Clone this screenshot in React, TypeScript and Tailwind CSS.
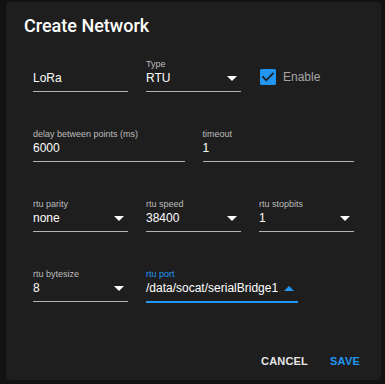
import React from 'react';

const sans = { fontFamily: '"Liberation Sans", Arial, sans-serif' };

function ArrowDown({ up = false, blue = false }: { up?: boolean; blue?: boolean }) {
  return (
    <svg width="10" height="5" viewBox="7 10 10 5" className={blue ? 'text-[#2196f3]' : 'text-white'} fill="currentColor">
      {up ? <path d="M7 15l5-5 5 5z" /> : <path d="M7 10l5 5 5-5z" />}
    </svg>
  );
}

type FieldProps = {
  label?: string;
  value: string;
  width: string;
  select?: boolean;
  focused?: boolean;
};

function Field({ label, value, width, select, focused }: FieldProps) {
  return (
    <div
      className={`${width} flex flex-col pb-[5px] ${
        focused ? 'border-b-2 border-[#2196f3]' : 'border-b border-[#b3b3b3]'
      }`}
    >
      <div className={`h-[11px] text-[9px] leading-[11px] ${focused ? 'text-[#2196f3]' : 'text-[#bdbdbd]'}`}>
        {label}
      </div>
      <div className="h-[16px] flex items-center justify-between pr-[4px] text-[12px] leading-[16px] text-white">
        <span className="whitespace-nowrap">{value}</span>
        {select && <ArrowDown up={focused} blue={focused} />}
      </div>
    </div>
  );
}

export default function App() {
  return (
    <div className="w-[385px] h-[384px] bg-[#121212] pt-[2px] pl-[6px]" style={sans}>
      <div className="w-[375px] h-[378px] bg-[#1e1e1e] rounded-[4px] flex flex-col">
        <h2
          className="pt-[12px] px-[18px] text-[18px] leading-[24px] font-medium text-white"
          style={{ fontFamily: 'Roboto, "Liberation Sans", sans-serif' }}
        >
          Create Network
        </h2>

        <div className="px-[27px] pt-[21px] flex flex-col gap-[37px]">
          <div className="flex items-start gap-[18px]">
            <Field value="LoRa" width="w-[95px]" />
            <Field label="Type" value="RTU" width="w-[95px]" select />
            <div className="flex items-center gap-[7px] ml-[1px] mt-[10px]">
              <svg width="16" height="16" viewBox="3 3 18 18" fill="#2196f3">
                <path d="M19 3H5c-1.11 0-2 .9-2 2v14c0 1.1.89 2 2 2h14c1.11 0 2-.9 2-2V5c0-1.1-.89-2-2-2zm-9 14l-5-5 1.41-1.41L10 14.17l7.59-7.59L19 8l-9 9z" />
              </svg>
              <span className="text-[12px] leading-[16px] text-[#a6a6a6]">Enable</span>
            </div>
          </div>

          <div className="flex items-start gap-[18px]">
            <Field label="delay between points (ms)" value="6000" width="flex-1" />
            <Field label="timeout" value="1" width="flex-1" />
          </div>

          <div className="flex items-start gap-[18px]">
            <Field label="rtu parity" value="none" width="w-[95px]" select />
            <Field label="rtu speed" value="38400" width="w-[95px]" select />
            <Field label="rtu stopbits" value="1" width="w-[95px]" select />
          </div>

          <div className="flex items-start gap-[18px]">
            <Field label="rtu bytesize" value="8" width="w-[95px]" select />
            <Field label="rtu port" value="/data/socat/serialBridge1" width="w-[152px]" select focused />
          </div>
        </div>

        <div className="mt-auto flex justify-end gap-[22px] pr-[21px] pb-[11px]">
          <button className="text-[11px] leading-[16px] font-bold tracking-[0.2px] text-[#e6e6e6]">CANCEL</button>
          <button className="text-[11px] leading-[16px] font-bold tracking-[0.2px] text-[#2196f3]">SAVE</button>
        </div>
      </div>
    </div>
  );
}
